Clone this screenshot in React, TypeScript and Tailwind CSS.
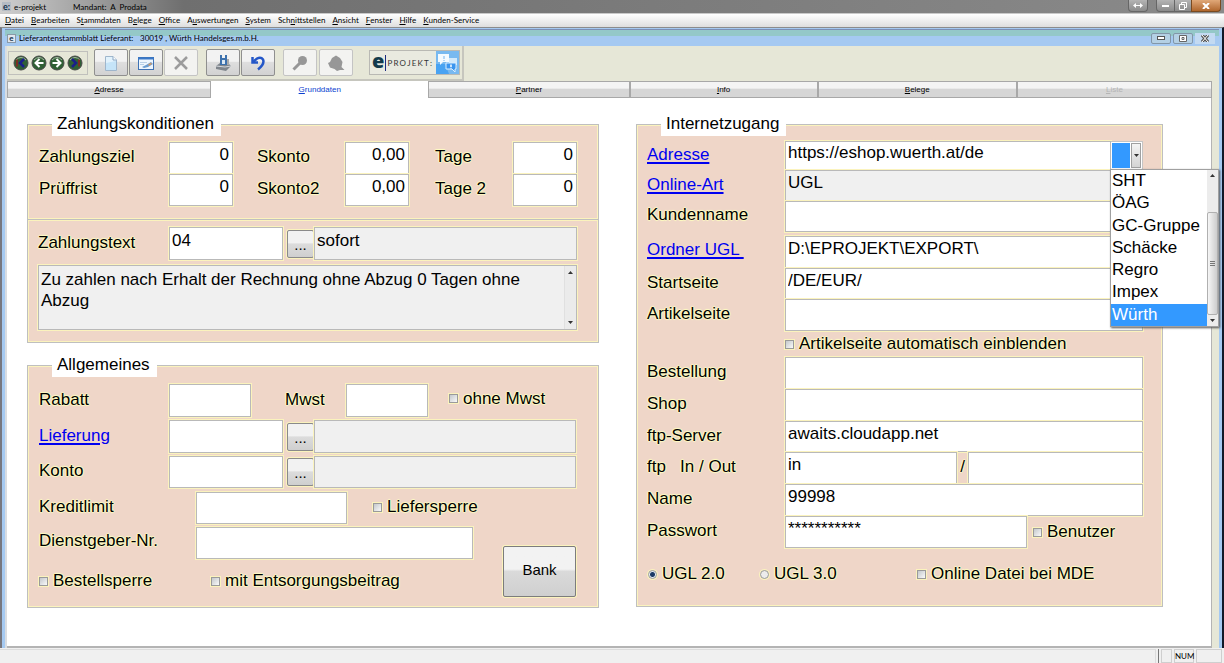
import React from 'react';
import clsx from 'clsx';

const MENU: [string, string, string][] = [
    ['', 'D', 'atei'],
    ['', 'B', 'earbeiten'],
    ['S', 't', 'ammdaten'],
    ['B', 'e', 'lege'],
    ['', 'O', 'ffice'],
    ['A', 'u', 'swertungen'],
    ['', 'S', 'ystem'],
    ['Sch', 'n', 'ittstellen'],
    ['', 'A', 'nsicht'],
    ['', 'F', 'enster'],
    ['', 'H', 'ilfe'],
    ['', 'K', 'unden-Service'],
];

const TABS = ['Adresse', 'Grunddaten', 'Partner', 'Info', 'Belege', 'Liste'];

const SUPPLIERS = ['SHT', 'ÖAG', 'GC-Gruppe', 'Schäcke', 'Regro', 'Impex', 'Würth'];

const GLOW = '[text-shadow:1px_0_1px_#ffffc0,-1px_0_1px_#ffffc0,0_1px_1px_#ffffc0,0_-1px_1px_#ffffc0]';

/* ---------- form controls ---------- */

interface FieldProps {
    id: string;
    label?: string;
    value?: string;
    type?: string;
    readOnly?: boolean;
    right?: boolean;
    className?: string;
}

function Field({ id, label, value = '', type = 'text', readOnly, right, className }: FieldProps) {
    return (
        <input
            id={id}
            type={type}
            aria-label={label}
            defaultValue={value}
            readOnly={readOnly}
            className={clsx(
                'block min-w-0 rounded-none border border-[#b9b9b9] pb-1.5 outline-none ring-1 ring-[#fbf3bd]',
                right ? 'pr-[3px] text-right' : 'pl-0.5',
                readOnly ? 'bg-[#f0f0f0]' : 'bg-white',
                className,
            )}
        />
    );
}

function Label({ htmlFor, className, children }: { htmlFor: string; className?: string; children: React.ReactNode }) {
    return (
        <label htmlFor={htmlFor} className={clsx('shrink-0 pb-0.5 whitespace-pre', GLOW, className)}>
            {children}
        </label>
    );
}

function LinkLabel({ className, children }: { className?: string; children: React.ReactNode }) {
    return (
        <span className={clsx('shrink-0 pb-0.5', className)}>
            <a href="#" className="whitespace-pre text-[#0000f0] underline decoration-2 underline-offset-2">
                {children}
            </a>
        </span>
    );
}

function Check({ id, label, className }: { id: string; label: string; className?: string }) {
    return (
        <span className={clsx('flex shrink-0 items-center gap-[5px] whitespace-nowrap', className)}>
            <input
                id={id}
                type="checkbox"
                className="size-[9px] appearance-none border border-[#9a9a9a] bg-linear-to-br from-[#c4c8cc] to-[#fafafa] ring-1 ring-[#fbf3bd]"
            />
            <label htmlFor={id} className={GLOW}>{label}</label>
        </span>
    );
}

function Radio({ id, label, checked, className }: { id: string; label: string; checked?: boolean; className?: string }) {
    return (
        <span className={clsx('flex shrink-0 items-center gap-[5px] whitespace-nowrap', className)}>
            <input
                id={id}
                name="ugl-version"
                type="radio"
                defaultChecked={checked}
                className="size-[9px] appearance-none rounded-full border border-[#9a9a9a] bg-[#ececec] ring-1 ring-[#fbf3bd] checked:bg-[radial-gradient(circle,#1c3a66_0_2px,#e4ecf4_3px)]"
            />
            <label htmlFor={id} className={GLOW}>{label}</label>
        </span>
    );
}

function Browse({ label }: { label: string }) {
    return (
        <button
            type="button"
            aria-label={label}
            className="ml-1 h-7 w-[27px] shrink-0 rounded-xs border border-[#8a8a8a] bg-linear-to-b from-[#f2f2f2] from-45% via-[#dcdcdc] via-50% to-[#cfcfcf] text-[15px] leading-7 ring-1 ring-[#fbf3bd]"
        >
            ...
        </button>
    );
}

function Group({ title, className, children }: { title: string; className?: string; children: React.ReactNode }) {
    return (
        <fieldset
            className={clsx(
                'min-w-0 border border-[#bfbfbf] bg-[#efd6c8] shadow-[inset_0_0_0_1px_#fbf3bd]',
                className,
            )}
        >
            <legend className="ml-6 h-[23px] bg-white pr-[7px] pl-[5px] leading-[21px]">{title}</legend>
            {children}
        </fieldset>
    );
}

function Caret({ up }: { up?: boolean }) {
    return (
        <svg viewBox="0 0 5 3" className="h-[3px] w-[5px]" aria-hidden="true">
            <path d={up ? 'M0 3L2.500 0L5 3Z' : 'M0 0L2.500 3L5 0Z'} fill="#333" />
        </svg>
    );
}

/* ---------- left column ---------- */

function PaymentRow({ items }: { items: { id: string; label: string; value: string }[] }) {
    const [a, b, c] = items;
    return (
        <div className="flex items-center">
            <Label htmlFor={a.id} className="w-[130px]">{a.label}</Label>
            <Field id={a.id} value={a.value} right className="h-8 flex-1" />
            <Label htmlFor={b.id} className="ml-6 w-[88px]">{b.label}</Label>
            <Field id={b.id} value={b.value} right className="h-8 flex-1" />
            <Label htmlFor={c.id} className="ml-[26px] w-[78px]">{c.label}</Label>
            <Field id={c.id} value={c.value} right className="h-8 flex-1" />
        </div>
    );
}

function PaymentTerms() {
    return (
        <Group title="Zahlungskonditionen">
            <div className="pt-1.5 pr-[21px] pb-3 pl-[11px]">
                <PaymentRow
                    items={[
                        { id: 'zahlungsziel', label: 'Zahlungsziel', value: '0' },
                        { id: 'skonto', label: 'Skonto', value: '0,00' },
                        { id: 'tage', label: 'Tage', value: '0' },
                    ]}
                />
                <PaymentRow
                    items={[
                        { id: 'prueffrist', label: 'Prüffrist', value: '0' },
                        { id: 'skonto2', label: 'Skonto2', value: '0,00' },
                        { id: 'tage2', label: 'Tage 2', value: '0' },
                    ]}
                />
            </div>
            <div className="h-[3px] border-y border-[#fbf3bd] bg-[#bfbfbf]" />
            <div className="pt-1.5 pr-[21px] pb-3 pl-2.5">
                <div className="flex items-center">
                    <Label htmlFor="zahlungstext" className="w-[131px]">Zahlungstext</Label>
                    <Field id="zahlungstext" value="04" className="h-[33px] w-[114px]" />
                    <Browse label="Zahlungstext wählen" />
                    <Field id="zahlungstext-name" label="Bezeichnung Zahlungstext" value="sofort" readOnly className="h-[33px] flex-1" />
                </div>
                <div className="mt-[5px] flex h-[65px] border border-[#b9b9b9] bg-[#f0f0f0] ring-1 ring-[#fbf3bd]">
                    <textarea
                        aria-label="Zahlungstext lang"
                        readOnly
                        defaultValue="Zu zahlen nach Erhalt der Rechnung ohne Abzug 0 Tagen ohne Abzug"
                        className="min-w-0 flex-1 resize-none overflow-hidden pt-[3px] pl-0.5 leading-[21px] outline-none"
                    />
                    <div className="flex w-3 flex-col items-center justify-between border-l border-[#e0e0e0] bg-[#ebebeb] py-[5px]">
                        <Caret up />
                        <Caret />
                    </div>
                </div>
            </div>
        </Group>
    );
}

function General() {
    return (
        <Group title="Allgemeines" className="mt-[11px]">
            <div className="pt-[7px] pr-[22px] pb-2.5 pl-[11px]">
                <div className="flex items-center">
                    <Label htmlFor="rabatt" className="w-[130px]">Rabatt</Label>
                    <Field id="rabatt" className="h-[33px] w-[82px]" />
                    <Label htmlFor="mwst" className="ml-[34px] w-[61px]">Mwst</Label>
                    <Field id="mwst" className="h-[33px] w-[82px]" />
                    <Check id="ohne-mwst" label="ohne Mwst" className="ml-[21px] pb-1" />
                </div>
                <div className="mt-[3px] flex items-center">
                    <LinkLabel className="w-[130px]">Lieferung</LinkLabel>
                    <Field id="lieferung" label="Lieferung" className="h-[33px] w-[114px]" />
                    <Browse label="Lieferung wählen" />
                    <Field id="lieferung-name" label="Bezeichnung Lieferung" readOnly className="h-[33px] flex-1" />
                </div>
                <div className="mt-[3px] flex items-center">
                    <Label htmlFor="konto" className="w-[130px]">Konto</Label>
                    <Field id="konto" className="h-8 w-[114px]" />
                    <Browse label="Konto wählen" />
                    <Field id="konto-name" label="Bezeichnung Konto" readOnly className="h-8 flex-1" />
                </div>
                <div className="mt-1 flex items-end">
                    <div className="min-w-0 flex-1">
                        <div className="flex items-center">
                            <Label htmlFor="kreditlimit" className="w-[157px]">Kreditlimit</Label>
                            <Field id="kreditlimit" className="h-8 w-[151px]" />
                            <Check id="liefersperre" label="Liefersperre" className="ml-[26px] pb-0.5" />
                        </div>
                        <div className="mt-[3px] flex items-center">
                            <Label htmlFor="dienstgeber" className="w-[157px] pb-1">Dienstgeber-Nr.</Label>
                            <Field id="dienstgeber" className="mr-[30px] h-8 flex-1" />
                        </div>
                        <div className="flex h-[38px] items-center pt-1.5">
                            <Check id="bestellsperre" label="Bestellsperre" className="w-[172px]" />
                            <Check id="entsorgung" label="mit Entsorgungsbeitrag" />
                        </div>
                    </div>
                    <button
                        type="button"
                        className="h-[51px] w-[73px] rounded-xs border border-[#7c7c7c] bg-linear-to-b from-[#f2f2f2] from-45% via-[#dadada] via-50% to-[#cfcfcf] pb-1 text-[15px] ring-1 ring-[#fbf3bd]"
                    >
                        Bank
                    </button>
                </div>
            </div>
        </Group>
    );
}

/* ---------- right column ---------- */

function SupplierSelect() {
    return (
        <div className="relative flex h-[29px] w-8 shrink-0 border border-l-0 border-[#c4c4c4] bg-white p-px">
            <select
                aria-label="Lieferant"
                defaultValue="Würth"
                className="w-[18px] appearance-none bg-[#3399ff] text-transparent outline-none"
            >
                {SUPPLIERS.map((name) => (
                    <option key={name}>{name}</option>
                ))}
            </select>
            <span className="ml-px flex flex-1 items-center justify-center border border-[#a0a0a0] bg-linear-to-b from-[#f4f4f4] to-[#d4d4d4]">
                <Caret />
            </span>
            <div className="absolute top-full -left-px z-10 flex h-[158px] w-[109px] border border-[#a0a0a0] bg-white shadow-[1px_1px_2px_#555]">
                <ul role="listbox" aria-label="Lieferanten" className="flex flex-1 flex-col">
                    {SUPPLIERS.map((name) => (
                        <li
                            key={name}
                            role="option"
                            aria-selected={name === 'Würth'}
                            className={clsx(
                                'flex-1 pl-px leading-[22px] whitespace-nowrap',
                                name === 'Würth' && 'bg-[#3399ff] text-white',
                            )}
                        >
                            {name}
                        </li>
                    ))}
                </ul>
                <div className="flex w-[11px] flex-col items-center bg-[#ececec] py-1">
                    <Caret up />
                    <div className="mt-[35px] mb-1 flex w-full flex-1 flex-col items-center justify-center gap-px rounded-xs border border-[#b0b0b0] bg-linear-to-r from-[#f6f6f6] to-[#cdcdcd]">
                        <span className="h-px w-[5px] bg-[#777]" />
                        <span className="h-px w-[5px] bg-[#777]" />
                        <span className="h-px w-[5px] bg-[#777]" />
                    </div>
                    <Caret />
                </div>
            </div>
        </div>
    );
}

function WebAccess() {
    return (
        <Group title="Internetzugang" className="pb-[18px]">
            <div className="pt-[5px] pr-[19px] pl-2.5">
                <div className="flex items-center">
                    <LinkLabel className="w-[138px]">Adresse</LinkLabel>
                    <Field id="adresse" label="Adresse" value="https://eshop.wuerth.at/de" className="h-[29px] flex-1" />
                    <SupplierSelect />
                </div>
                <div className="flex items-center">
                    <LinkLabel className="w-[138px]">Online-Art</LinkLabel>
                    <Field id="online-art" label="Online-Art" value="UGL" readOnly className="h-[31px] flex-1" />
                </div>
                <div className="flex items-center">
                    <Label htmlFor="kundenname" className="w-[138px] pb-1">Kundenname</Label>
                    <Field id="kundenname" className="h-[31px] flex-1" />
                </div>
                <div className="mt-1 flex items-center">
                    <LinkLabel className="w-[138px] pb-1">{'Ordner UGL '}</LinkLabel>
                    <Field id="ordner" label="Ordner UGL" value="D:\EPROJEKT\EXPORT\" className="h-8 flex-1" />
                </div>
                <div className="flex items-center">
                    <Label htmlFor="startseite" className="w-[138px]">Startseite</Label>
                    <Field id="startseite" value="/DE/EUR/" className="h-[31px] flex-1" />
                </div>
                <div className="flex items-center">
                    <Label htmlFor="artikelseite" className="w-[138px]">Artikelseite</Label>
                    <Field id="artikelseite" className="h-8 flex-1" />
                </div>
                <Check id="einblenden" label="Artikelseite automatisch einblenden" className="ml-[138px] h-[26px]" />
                <div className="flex items-center">
                    <Label htmlFor="bestellung" className="w-[138px]">Bestellung</Label>
                    <Field id="bestellung" className="h-8 flex-1" />
                </div>
                <div className="flex items-center">
                    <Label htmlFor="shop" className="w-[138px]">Shop</Label>
                    <Field id="shop" className="h-8 flex-1" />
                </div>
                <div className="flex items-center">
                    <Label htmlFor="ftp-server" className="w-[138px]">ftp-Server</Label>
                    <Field id="ftp-server" value="awaits.cloudapp.net" className="h-[31px] flex-1" />
                </div>
                <div className="flex items-center">
                    <Label htmlFor="ftp-in" className="w-[138px]">{'ftp   In / Out'}</Label>
                    <Field id="ftp-in" value="in" className="h-8 flex-[172]" />
                    <Label htmlFor="ftp-out" className="w-[11px] text-center">/</Label>
                    <Field id="ftp-out" label="ftp Out" className="h-8 flex-[175]" />
                </div>
                <div className="flex items-center">
                    <Label htmlFor="name" className="w-[138px]">Name</Label>
                    <Field id="name" value="99998" className="h-8 flex-1" />
                </div>
                <div className="flex items-center">
                    <Label htmlFor="passwort" className="w-[138px]">Passwort</Label>
                    <Field id="passwort" value="***********" className="h-8 flex-1" />
                    <Check id="benutzer" label="Benutzer" className="w-[116px] pl-1.5" />
                </div>
                <div className="mt-3 flex h-7 items-center">
                    <Radio id="ugl2" label="UGL 2.0" checked className="ml-px w-[112px]" />
                    <Radio id="ugl3" label="UGL 3.0" className="w-[157px]" />
                    <Check id="mde" label="Online Datei bei MDE" />
                </div>
            </div>
        </Group>
    );
}

/* ---------- window chrome ---------- */

function TitleBar() {
    return (
        <header className="flex h-[14px] items-start border-b border-[#c9c9c9] bg-linear-to-r from-[#cfcfcf] via-[#6f6f6f] via-15% to-[#8a8a8a] pl-0.5">
            <span className="mt-0.5 flex size-[9px] items-center justify-center bg-[#b5bcc4] text-[9px] leading-[9px] font-bold text-[#12304a]">e:</span>
            <span className="ml-[3px] w-[59px] text-[8px] leading-[14px]">e-projekt</span>
            <span className="flex-1 text-[8px] leading-[14px] whitespace-pre">Mandant:  A  Prodata</span>
            <div className="flex h-3 pr-[3px]">
                <button type="button" aria-label="Verschieben" className="mr-2 flex w-5 items-center justify-center rounded-b-sm border border-t-0 border-[#666] bg-linear-to-b from-[#b4b4b4] to-[#8b8b8b]">
                    <svg viewBox="0 0 10 5" className="h-[5px] w-2.5"><path d="M0 2.500L3 0V2H7V0L10 2.500L7 5V3H3V5Z" fill="#fff" /></svg>
                </button>
                <button type="button" aria-label="Minimieren" className="flex w-[19px] items-end justify-center rounded-bl-sm border border-t-0 border-[#666] bg-linear-to-b from-[#b4b4b4] to-[#8b8b8b] pb-1">
                    <span className="h-0.5 w-[7px] bg-white" />
                </button>
                <button type="button" aria-label="Wiederherstellen" className="flex w-4 items-center justify-center border-b border-[#666] bg-linear-to-b from-[#b4b4b4] to-[#8b8b8b]">
                    <svg viewBox="0 0 8 8" className="size-2" fill="none" stroke="#fff"><path d="M2.500 2V.5H7.500V5.500H6M.5 2.500H5.500V7.500H.5Z" /></svg>
                </button>
                <button type="button" aria-label="Schließen" className="flex w-[30px] items-center justify-center rounded-br-sm border border-t-0 border-[#7a4a20] bg-linear-to-b from-[#e0a878] to-[#b0672c]">
                    <svg viewBox="0 0 8 6" className="h-1.5 w-2" stroke="#fff" strokeWidth="2"><path d="M1 0L7 6M7 0L1 6" /></svg>
                </button>
            </div>
        </header>
    );
}

function MenuBar() {
    return (
        <nav className="flex h-[13px] gap-[7px] bg-linear-to-b from-white to-[#dedede] pl-[5px] text-[8px] leading-[13px]">
            {MENU.map(([pre, key, post]) => (
                <button key={pre + key + post} type="button" className="flex">
                    {pre}
                    <span className="underline">{key}</span>
                    {post}
                </button>
            ))}
        </nav>
    );
}

function WindowCaption() {
    return (
        <div className="flex h-[17px] items-center border-t border-[#7d8fb5] bg-linear-to-b from-[#94c8c8] from-35% to-[#a5c9f1] to-40% pr-1 pl-0.5 text-[8px] whitespace-nowrap">
            <span className="flex size-[9px] items-center justify-center border border-[#8a9aa8] bg-[#dfe6ee] text-[8px] leading-[7px] font-bold text-[#12304a]">e</span>
            <span className="ml-[3px] w-[121px]">Lieferantenstammblatt Lieferant:</span>
            <span className="flex-1">30019 , Würth Handelsges.m.b.H.</span>
            <div className="flex h-[11px] gap-0.5">
                <button type="button" aria-label="Fenster minimieren" className="flex w-5 items-center justify-center rounded-xs border border-[#8296a8] bg-[#b4d0e4]">
                    <span className="h-1 w-2 border border-[#555] bg-white" />
                </button>
                <button type="button" aria-label="Fenster maximieren" className="flex w-5 items-center justify-center rounded-xs border border-[#8296a8] bg-[#b4d0e4]">
                    <svg viewBox="0 0 8 7" className="h-[7px] w-2"><path d="M.5 .5H7.500V6.500H.5Z" fill="#fff" stroke="#666" /><path d="M3 2.500H5V4.500H3Z" fill="none" stroke="#666" /></svg>
                </button>
                <button type="button" aria-label="Fenster schließen" className="flex w-5 items-center justify-center bg-[#c3daf2]">
                    <svg viewBox="0 0 8 7" className="h-[7px] w-2"><path d="M1 0L7 7M7 0L1 7" stroke="#555" strokeWidth="3" /><path d="M1 0L7 7M7 0L1 7" stroke="#fff" /></svg>
                </button>
            </div>
        </div>
    );
}

function NavButton({ label, children }: { label: string; children: React.ReactNode }) {
    return (
        <button type="button" aria-label={label}>
            <svg viewBox="0 0 16 16" className="size-4" fill="none">
                <circle cx="8" cy="8" r="7" fill="#2f6034" stroke="#4a4a4a" />
                <path d="M3 5Q8 0 13 5" stroke="#a9b8a6" strokeWidth="1" />
                {children}
            </svg>
        </button>
    );
}

function ToolButton({ label, disabled, className, children }: { label: string; disabled?: boolean; className?: string; children: React.ReactNode }) {
    return (
        <button
            type="button"
            aria-label={label}
            disabled={disabled}
            className={clsx(
                'flex h-[27px] w-[34px] items-center justify-center rounded-xs border',
                disabled
                    ? 'border-[#c4c4c4] bg-[#f3f3f1]'
                    : 'border-[#8f8f8f] bg-linear-to-b from-[#f2f2f2] from-45% via-[#dedede] via-50% to-[#d2d2d2]',
                className,
            )}
        >
            <svg viewBox="0 0 18 18" className="size-[18px]" fill="none">{children}</svg>
        </button>
    );
}

function Toolbar() {
    return (
        <div className="flex h-[35px] bg-[#e6e7d7]">
            <div className="flex items-center border-r-2 border-b-2 border-[#c6c6be] pr-0.5 pl-px">
                <div className="flex h-6 w-20 items-center justify-center gap-[2px] border border-[#c0c0bc]">
                    <NavButton label="Erster Datensatz">
                        <path d="M4 4.500V11.500" stroke="#7c2f22" strokeWidth="2" />
                        <path d="M11 4L7 8L11 12" stroke="#1b1f8a" strokeWidth="2.500" />
                    </NavButton>
                    <NavButton label="Vorheriger Datensatz">
                        <path d="M8.500 4L4.500 8L8.500 12M5 8H12.500" stroke="#fff" strokeWidth="2" />
                    </NavButton>
                    <NavButton label="Nächster Datensatz">
                        <path d="M7.500 4L11.500 8L7.500 12M11 8H3.500" stroke="#fff" strokeWidth="2" />
                    </NavButton>
                    <NavButton label="Letzter Datensatz">
                        <path d="M12 4.500V11.500" stroke="#7c2f22" strokeWidth="2" />
                        <path d="M5 4L9 8L5 12" stroke="#1b1f8a" strokeWidth="2.500" />
                    </NavButton>
                </div>
                <ToolButton label="Neu" className="ml-1.5">
                    <path d="M3.500 2.500H11L14.500 6V16.500H3.500Z" fill="#e2f2fc" stroke="#9fb6cc" />
                    <path d="M4 9L14 7V16H4Z" fill="#c5e4f8" />
                    <path d="M11 2.500V6H14.500" fill="#fff" stroke="#8aa6c4" />
                </ToolButton>
                <ToolButton label="Ändern" className="ml-px">
                    <rect x="1.500" y="3.500" width="15" height="12" fill="#eef6fd" stroke="#3f72b5" />
                    <path d="M1 4.500H17" stroke="#3b78c8" strokeWidth="2" />
                    <path d="M3 8.500H10M3 10.500H7" stroke="#b7cfe6" />
                    <path d="M5 13L9 11L14 8L16 10L11 13L7 14Z" fill="#6a9cd0" />
                    <path d="M11 10.500L14 8.500L15 10L12 12Z" fill="#c99a70" />
                </ToolButton>
                <ToolButton label="Löschen" disabled className="ml-px">
                    <path d="M3 3L15 15M15 3L3 15" stroke="#9c9c9c" strokeWidth="2.500" />
                </ToolButton>
                <ToolButton label="Speichern" className="ml-2">
                    <path d="M2 12L6 9H14L17 12L12 17L2 15Z" fill="#7f858c" />
                    <path d="M2 12L11 13L17 12" stroke="#d5d8dc" />
                    <path d="M6 1H8V4H11V1H13V11H6Z" fill="#3d71ad" />
                    <path d="M8 6H11V10H8Z" fill="#dbe8f4" />
                    <path d="M13 5H15V11H13Z" fill="#aaa" />
                </ToolButton>
                <ToolButton label="Rückgängig" className="ml-px">
                    <path d="M3.500 3V8.500H9" stroke="#2457c8" strokeWidth="2.500" />
                    <path d="M4 8L8 4.500Q12 2.500 14 5.500Q16 10 9 15.500" stroke="#2457c8" strokeWidth="2.500" />
                </ToolButton>
                <ToolButton label="Suchen" disabled className="ml-2">
                    <circle cx="11.500" cy="6.500" r="4.500" fill="#979797" />
                    <path d="M9 9L2.500 15.500" stroke="#979797" strokeWidth="3" />
                </ToolButton>
                <ToolButton label="Auswahl" disabled className="ml-0.5">
                    <path d="M5 4L9 1.500L13 4L15.500 8L14.500 13L17.500 16H13L10 17L7.500 15L3 13.500L1 9L3 8Z" fill="#979797" />
                </ToolButton>
                <div className="ml-4 flex h-[25px] w-[91px] items-center border border-[#b9b9b4] bg-[#e9eae0]">
                    <span className="pb-1 pl-0.5 font-['Open_Sans',sans-serif] text-[20px] leading-5 font-extrabold text-[#123a4c]">e</span>
                    <span className="mx-px h-4 w-px bg-[#1b2a80]" />
                    <span className="flex flex-1 justify-between pr-1 text-[8px] leading-3 text-[#333]">
                        {[...'PROJEKT:'].map((c, i) => <span key={i}>{c}</span>)}
                    </span>
                    <svg viewBox="0 0 23 23" className="size-[23px] shrink-0">
                        <rect width="23" height="23" fill="#78b9f0" />
                        <path d="M0 13H9L13 23H0Z" fill="#49a3f2" />
                        <path d="M2 3H13V11H7L4 14V11H2Z" fill="#f4faff" />
                        <path d="M13 7H21V14H15L13 12Z" fill="#d2e9fb" />
                        <path d="M10 12H20V18H19V21L16 18H10Z" fill="#3b95ef" stroke="#d9edfd" />
                        <path d="M15 13.500V16M15 16.800V17.500" stroke="#fff" strokeWidth="1.500" />
                        <path d="M8 5V8M8 9V10" stroke="#9dccf5" strokeWidth="1.500" />
                    </svg>
                </div>
            </div>
        </div>
    );
}

function TabStrip() {
    return (
        <div
            role="tablist"
            className="mr-1 grid h-[17px] grid-cols-[204fr_217fr_201fr_188fr_199fr_195fr] font-['Liberation_Sans',Arial,sans-serif] text-[8px]"
        >
            {TABS.map((tab) => (
                <button
                    key={tab}
                    type="button"
                    role="tab"
                    aria-selected={tab === 'Grunddaten'}
                    disabled={tab === 'Liste'}
                    className={clsx(
                        'leading-3',
                        tab === 'Grunddaten'
                            ? 'bg-white text-[#0a3fd0]'
                            : 'border border-[#a8a8a8] bg-linear-to-b from-[#f4f4f4] from-40% to-[#d6d6d6] to-50%',
                        tab === 'Liste' && 'text-[#b4b4b4]',
                    )}
                >
                    <span className="underline">{tab[0]}</span>
                    {tab.slice(1)}
                </button>
            ))}
        </div>
    );
}

function StatusBar() {
    return (
        <footer className="flex h-[15px] items-stretch gap-0.5 bg-[#f0f0f0] pt-px pr-0.5 text-[8px] leading-3">
            <div className="flex-1 border-t border-r border-[#dcdcdc]" />
            <div className="w-px bg-[#777]" />
            <div className="w-[11px] border border-[#cfcfcf]" />
            <div className="w-5 border border-[#cfcfcf] text-center">NUM</div>
            <div className="w-[26px] border border-[#cfcfcf]" />
        </footer>
    );
}

export default function App() {
    return (
        <div className="flex min-h-screen flex-col bg-[#f0f0f0] font-['Lato','Noto_Sans',sans-serif] text-black">
            <TitleBar />
            <MenuBar />
            <section className="flex flex-1 flex-col border-x-2 border-t border-l-[#77777f] border-t-[#8c8c8c] border-r-[#101828] bg-[#a5c9f1] px-[3px] pt-px">
                <WindowCaption />
                <div className="flex flex-1 flex-col border-l-2 border-[#d9dde2] bg-[#e6e7d7]">
                    <Toolbar />
                    <div className="flex flex-1 flex-col pr-[3px]">
                        <TabStrip />
                        <main className="mr-1 grid flex-1 grid-cols-[572fr_527fr] items-start gap-x-[37px] border-r border-b-2 border-[#b4b4b4] bg-white pt-[15px] pr-12 pb-9 pl-5 font-['Liberation_Sans',Arial,sans-serif] text-[17px] leading-5">
                            <div className="min-w-0">
                                <PaymentTerms />
                                <General />
                            </div>
                            <WebAccess />
                        </main>
                    </div>
                </div>
            </section>
            <StatusBar />
        </div>
    );
}
